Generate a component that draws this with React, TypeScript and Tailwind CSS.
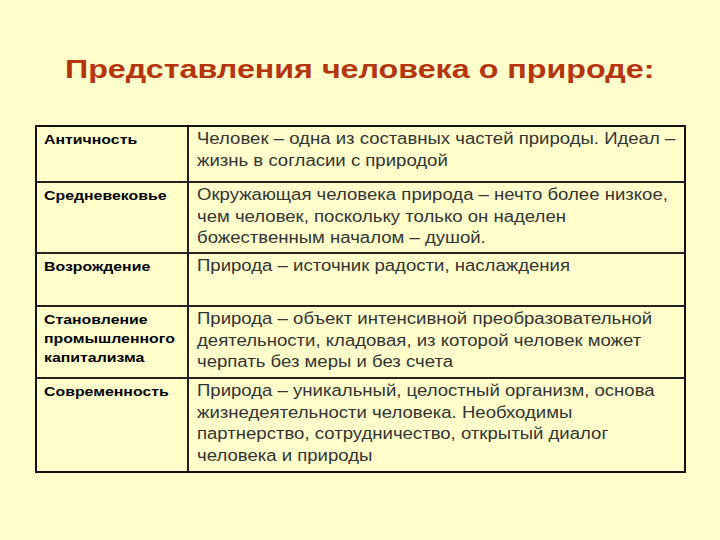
const rows: { era: string; text: string; h: string }[] = [
  {
    era: 'Античность',
    text: 'Человек – одна из составных частей природы. Идеал\u00a0– жизнь в согласии с природой',
    h: 'h-[54px]',
  },
  {
    era: 'Средневековье',
    text: 'Окружающая человека природа – нечто более низкое, чем человек, поскольку только он наделен божественным началом – душой.',
    h: 'h-[71px]',
  },
  {
    era: 'Возрождение',
    text: 'Природа – источник радости, наслаждения',
    h: 'h-[53px]',
  },
  {
    era: 'Становление промышленного капитализма',
    text: 'Природа – объект интенсивной преобразовательной деятельности, кладовая, из которой человек может черпать без меры и без счета',
    h: 'h-[72px]',
  },
  {
    era: 'Современность',
    text: 'Природа – уникальный, целостный организм, основа жизнедеятельности человека. Необходимы партнерство, сотрудничество, открытый диалог человека и природы',
    h: 'h-[94px]',
  },
];

export default function App() {
  return (
    <div className="w-[720px] h-[540px] bg-[#ffffcc] font-['Liberation_Sans',Arial,sans-serif] overflow-hidden">
      <div className="pt-[54px] h-[125px] text-center">
        <h1 className="inline-block origin-center scale-x-[1.24] text-[26px] font-bold text-[#b5350f] leading-[30px]">
          Представления человека о природе:
        </h1>
      </div>
      <div className="ml-[35px] w-[651px] border-2 border-[#111]">
        {rows.map((r, i) => (
          <div
            key={r.era}
            className={`flex ${r.h} ${i > 0 ? 'border-t-2 border-[#222]' : ''}`}
          >
            <div className="w-[152px] shrink-0 border-r-2 border-[#222] pl-[7px] pt-[3px]">
              <div className="w-[115px] origin-left scale-x-[1.22] text-[13px] font-bold leading-[19px] text-black">
                {r.era}
              </div>
            </div>
            <div className="flex-1 pl-[8px] pt-[1px]">
              <div className="w-[416px] origin-left scale-x-[1.16] text-[16px] leading-[21.5px] text-[#333]">
                {r.text}
              </div>
            </div>
          </div>
        ))}
      </div>
    </div>
  );
}
